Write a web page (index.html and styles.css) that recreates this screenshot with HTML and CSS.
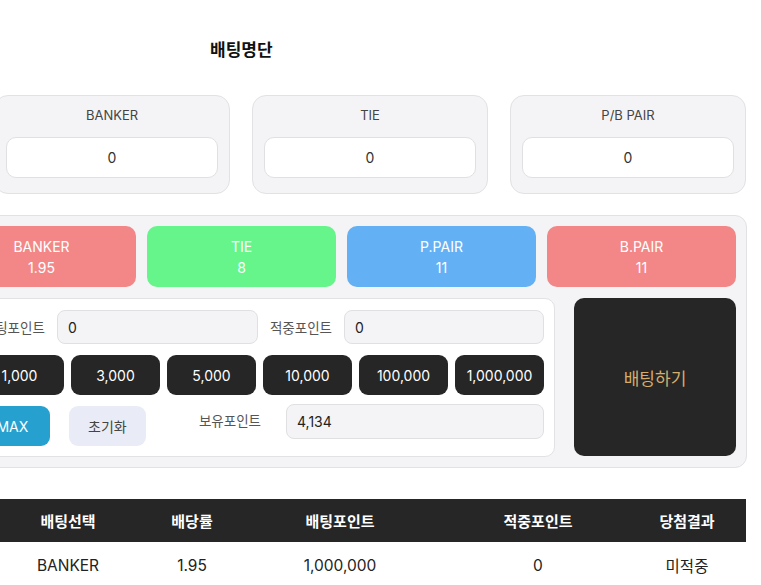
FILE: index.html
```html
<!DOCTYPE html>
<html lang="ko">
  <head>
    <meta charset="UTF-8" />
    <meta name="viewport" content="width=device-width, initial-scale=1.0" />
    <title>배팅명단</title>
    <link rel="stylesheet" href="styles.css">
  </head>
  <body>
    <div class="page">
      <div class="page-title">배팅명단</div>

      <div class="summary">
        <div class="summary-card">
          <div class="summary-label">BANKER</div>
          <div class="summary-value">0</div>
        </div>
        <div class="summary-card">
          <div class="summary-label">TIE</div>
          <div class="summary-value">0</div>
        </div>
        <div class="summary-card">
          <div class="summary-label">P/B PAIR</div>
          <div class="summary-value">0</div>
        </div>
      </div>

      <div class="bet-panel">
        <div class="odds">
          <div class="odd odd-red">
            <div>BANKER</div>
            <div>1.95</div>
          </div>
          <div class="odd odd-green">
            <div>TIE</div>
            <div>8</div>
          </div>
          <div class="odd odd-blue">
            <div>P.PAIR</div>
            <div>11</div>
          </div>
          <div class="odd odd-red">
            <div>B.PAIR</div>
            <div>11</div>
          </div>
        </div>

        <div class="bet-body">
          <div class="bet-form">
            <div class="form-row">
              <div class="form-label">배팅포인트</div>
              <div class="form-input input-bet">0</div>
              <div class="form-label">적중포인트</div>
              <div class="form-input input-win">0</div>
            </div>
            <div class="form-row">
              <div class="chip">1,000</div>
              <div class="chip">3,000</div>
              <div class="chip">5,000</div>
              <div class="chip">10,000</div>
              <div class="chip">100,000</div>
              <div class="chip">1,000,000</div>
            </div>
            <div class="form-row row-hold">
              <div class="btn-max">MAX</div>
              <div class="btn-reset">초기화</div>
              <div class="form-label hold-label">보유포인트</div>
              <div class="form-input input-hold">4,134</div>
            </div>
          </div>
          <div class="bet-submit">배팅하기</div>
        </div>
      </div>

      <table class="bet-list">
        <thead>
          <tr>
            <th class="col-pick">배팅선택</th>
            <th class="col-rate">배당률</th>
            <th class="col-point">배팅포인트</th>
            <th class="col-win">적중포인트</th>
            <th class="col-result">당첨결과</th>
          </tr>
        </thead>
        <tbody>
          <tr>
            <td>BANKER</td>
            <td>1.95</td>
            <td>1,000,000</td>
            <td>0</td>
            <td>미적중</td>
          </tr>
        </tbody>
      </table>
    </div>
  </body>
</html>
```

FILE: styles.css
```css
* {
  margin: 0;
  padding: 0;
  box-sizing: border-box;
  font-family: "Inter", "Noto Sans CJK KR", sans-serif;
}

body {
  overflow: hidden;
  background-color: #fff;
  color: #222;
}

.page {
  width: 811px;
  margin-left: -64px;
}

.page-title {
  padding: 38px 0 0 274px;
  font-size: 17px;
  font-weight: bold;
  line-height: 24px;
  color: #111;
}

.summary {
  display: grid;
  grid-template-columns: repeat(3, 1fr);
  gap: 22px;
  width: 752px;
  margin: 33px 0 0 58px;
}

.summary-card {
  background-color: #f4f4f6;
  border: 1px solid #e2e2e4;
  border-radius: 14px;
  padding: 9px 11px 15px;
}

.summary-label {
  text-align: center;
  font-size: 13px;
  line-height: 20px;
  color: #444;
  margin-bottom: 12px;
}

.summary-value {
  height: 41px;
  background-color: #fff;
  border: 1px solid #e0e0e2;
  border-radius: 10px;
  display: flex;
  justify-content: center;
  align-items: center;
  font-size: 14px;
  color: #333;
}

.bet-panel {
  margin-top: 21px;
  background-color: #f4f4f6;
  border: 1px solid #e2e2e4;
  border-radius: 12px;
  padding: 10px;
}

.odds {
  display: grid;
  grid-template-columns: repeat(4, 1fr);
  gap: 11px;
}

.odd {
  height: 61px;
  border-radius: 10px;
  display: flex;
  flex-direction: column;
  justify-content: center;
  align-items: center;
  color: #fff;
  font-size: 14px;
  line-height: 21px;
}

.odd-red {
  background-color: #f38787;
}

.odd-green {
  background-color: #66f58b;
}

.odd-blue {
  background-color: #63b1f4;
}

.bet-body {
  display: flex;
  gap: 19px;
  margin-top: 11px;
}

.bet-form {
  flex: 1;
  background-color: #fff;
  border: 1px solid #e2e2e4;
  border-radius: 10px;
  padding: 11px 10px 10px;
  display: flex;
  flex-direction: column;
  gap: 11px;
}

.form-row {
  display: flex;
  justify-content: flex-end;
  align-items: center;
  gap: 12px;
}

.form-label {
  font-size: 13.5px;
  color: #555;
  white-space: nowrap;
}

.form-input {
  height: 34px;
  background-color: #f4f4f6;
  border: 1px solid #e0e0e2;
  border-radius: 8px;
  padding-left: 10px;
  display: flex;
  align-items: center;
  font-size: 14px;
  color: #222;
}

.input-bet {
  width: 201px;
}

.input-win {
  width: 200px;
}

.chip {
  width: 89px;
  height: 40px;
  flex-shrink: 0;
  background-color: #262626;
  border-radius: 9px;
  color: #fff;
  font-size: 14px;
  display: flex;
  justify-content: center;
  align-items: center;
}

.form-row .chip + .chip {
  margin-left: -5px;
}

.row-hold {
  gap: 0;
  align-items: flex-start;
}

.btn-max,
.btn-reset {
  height: 40px;
  border-radius: 9px;
  display: flex;
  justify-content: center;
  align-items: center;
  font-size: 14px;
}

.btn-max {
  width: 75px;
  margin-right: 19px;
  background-color: #25a0cf;
  color: #fff;
}

.btn-reset {
  width: 77px;
  background-color: #e9ecf6;
  color: #444;
}

.hold-label {
  margin: -2px 25px 0 53px;
  line-height: 35px;
}

.input-hold {
  width: 258px;
  height: 35px;
  margin-top: -2px;
}

.bet-submit {
  width: 162px;
  height: 158px;
  background-color: #262626;
  border-radius: 10px;
  display: flex;
  justify-content: center;
  align-items: center;
  color: #d6ae6b;
  font-size: 17px;
}

.bet-list {
  width: 762px;
  margin: 31px 0 0 48px;
  border-collapse: collapse;
  table-layout: fixed;
}

.bet-list th {
  height: 43px;
  background-color: #262626;
  color: #fff;
  font-size: 15px;
  font-weight: bold;
}

.bet-list td {
  height: 46px;
  text-align: center;
  font-size: 15.5px;
  color: #222;
}

.col-pick {
  width: 168px;
}

.col-rate {
  width: 80px;
}

.col-point {
  width: 216px;
}

.col-win {
  width: 180px;
}

.col-result {
  width: 118px;
}
```
